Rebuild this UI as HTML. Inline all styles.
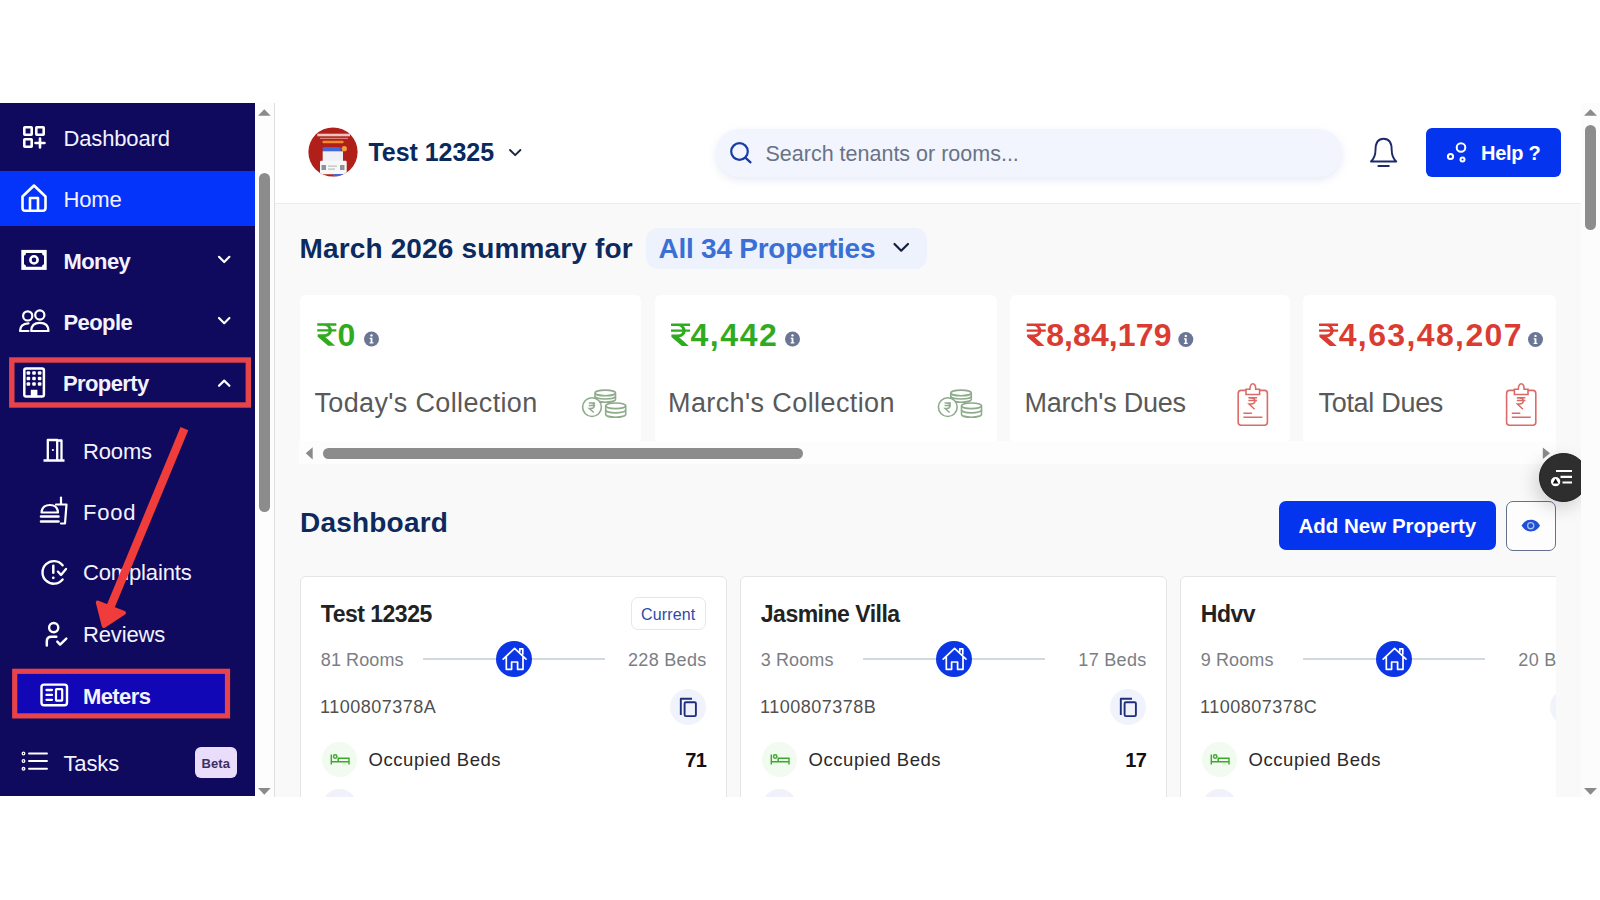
<!DOCTYPE html>
<html><head><meta charset="utf-8"><title>Dashboard</title>
<style>
*{box-sizing:border-box;margin:0;padding:0}
html,body{width:1600px;height:900px;overflow:hidden;background:#fff;font-family:"Liberation Sans",sans-serif}
.a{position:absolute}
.t{position:absolute;white-space:nowrap;line-height:1}
svg{position:absolute;overflow:visible}
#side{left:0;top:103px;width:255px;height:693px;background:#0f0a5e;overflow:hidden}
.st{color:#f4f2ff;font-size:22px;letter-spacing:-0.15px}
.sb{font-weight:bold;letter-spacing:-0.6px}
#main{left:275px;top:103px;width:1306px;height:694px;background:#f9f9f9;overflow:hidden}
</style></head><body>

<!-- SIDEBAR -->
<div id="side" class="a"></div>
<div class="a" style="left:0;top:171px;width:255px;height:55px;background:#0434fa"></div>
<div class="a" style="left:14px;top:671px;width:214px;height:45px;background:#1107b6"></div>

<div class="t st" style="left:63.5px;top:128px">Dashboard</div>
<div class="t st" style="left:63.5px;top:189.4px">Home</div>
<div class="t st sb" style="left:63.5px;top:251px">Money</div>
<div class="t st sb" style="left:63.5px;top:312px">People</div>
<div class="t st sb" style="left:63px;top:373px">Property</div>
<div class="t st" style="left:83px;top:441px">Rooms</div>
<div class="t st" style="left:83px;top:502.2px;letter-spacing:0.8px">Food</div>
<div class="t st" style="left:83px;top:562.4px">Complaints</div>
<div class="t st" style="left:83px;top:624px">Reviews</div>
<div class="t st sb" style="left:83px;top:685.8px">Meters</div>
<div class="t st" style="left:63.5px;top:753px">Tasks</div>
<div class="a" style="left:195px;top:747px;width:42px;height:31px;background:#e9ddfb;border-radius:6px"></div>
<div class="t" style="left:201.5px;top:757.2px;font-size:13px;font-weight:bold;color:#3b2f63;letter-spacing:0.1px">Beta</div>

<!-- sidebar icons -->
<svg style="left:0;top:0" width="255" height="900" viewBox="0 0 255 900" fill="none" stroke="#fff" stroke-width="2.6" stroke-linejoin="round" stroke-linecap="round">
  <!-- dashboard -->
  <rect x="24.3" y="127.3" width="7.4" height="7.4" rx="0.5"/>
  <rect x="36.3" y="127.3" width="7.4" height="7.4" rx="0.5"/>
  <rect x="24.3" y="139.3" width="7.4" height="7.4" rx="0.5"/>
  <path d="M40 138.5v9M35.5 143h9"/>
  <!-- home -->
  <path d="M22.5 196.5 L34 185.5 L45.5 196.5 V208 Q45.5 210.8 42.7 210.8 H25.3 Q22.5 210.8 22.5 208 Z"/>
  <path d="M30 210.5 V198 H38 V210.5"/>
  <!-- money -->
  <rect x="21.3" y="249.9" width="25.4" height="20" fill="#fff" stroke="none"/>
  <path d="M26 253 H42 Q42 255.5 44 255.5 V264.3 Q42 264.3 42 266.8 H26 Q26 264.3 24 264.3 V255.5 Q26 255.5 26 253 Z" fill="#0f0a5e" stroke="none"/>
  <circle cx="34" cy="259.9" r="3.6" stroke-width="2.6"/>
  <!-- people -->
  <circle cx="27.7" cy="315.9" r="4.6" stroke-width="2.2"/>
  <circle cx="39.8" cy="315" r="4.6" stroke-width="2.2"/>
  <path d="M31.2 331 H48.5 Q48.5 322.8 39.8 322.8 Q31.2 322.8 31.2 331 Z" stroke-width="2.2"/>
  <path d="M28.5 323.3 Q20 323.8 20 331 H28.5" stroke-width="2.2"/>
  <!-- property -->
  <rect x="24.3" y="368.5" width="19.6" height="28" rx="1.8" stroke-width="2.5"/>
  <g fill="#fff" stroke="none">
    <rect x="26.6" y="371.2" width="3.6" height="3.6" rx="1"/><rect x="32.2" y="371.2" width="3.6" height="3.6" rx="1"/><rect x="37.8" y="371.2" width="3.6" height="3.6" rx="1"/>
    <rect x="26.6" y="376.7" width="3.6" height="3.6" rx="1"/><rect x="32.2" y="376.7" width="3.6" height="3.6" rx="1"/><rect x="37.8" y="376.7" width="3.6" height="3.6" rx="1"/>
    <rect x="26.6" y="382.2" width="3.6" height="3.6" rx="1"/><rect x="32.2" y="382.2" width="3.6" height="3.6" rx="1"/><rect x="37.8" y="382.2" width="3.6" height="3.6" rx="1"/>
    <rect x="30.8" y="389.8" width="6.6" height="7.5"/>
  </g>
  <!-- rooms -->
  <path d="M43.5 460.5 H64.5 M47.8 460.5 V440 H57.2 V460.5 M57.2 440.5 H61.5 V460.5" stroke-width="2.3" stroke-linecap="butt"/>
  <circle cx="52.9" cy="450" r="1.1" fill="#fff" stroke="none"/>
  <!-- food -->
  <path d="M41.5 512.5 Q42 505 50 505 Q57.5 505 58 512.5 Z" stroke-width="2.2"/>
  <path d="M41 516.5 H58.5 M41 521.5 H58.5" stroke-width="2.6"/>
  <path d="M56 504.5 H66.5 L65 523.5 H61" stroke-width="2.2"/>
  <path d="M61 504 V497.5" stroke-width="2.2"/>
  <!-- complaints -->
  <path d="M62.6 565.3 A11.3 11.3 0 1 0 62.6 579.5" stroke-width="2.4"/>
  <path d="M53.3 565.8 V572.8" stroke-width="2.5"/>
  <circle cx="53.3" cy="577.8" r="1.4" fill="#fff" stroke="none"/>
  <path d="M57.9 571.6 L61 575 L66 569" stroke-width="2.3"/>
  <!-- reviews -->
  <circle cx="53.7" cy="627.6" r="4.6" stroke-width="2.4"/>
  <path d="M46.8 645.5 V641.5 Q46.8 636.8 51.5 636.8 H56.3" stroke-width="2.5"/>
  <path d="M57.3 641.6 L60.1 644.6 L66.3 638.6" stroke-width="2.4"/>
  <!-- meters -->
  <rect x="41.5" y="684.6" width="25.5" height="20.6" rx="2.5" stroke-width="2.4"/>
  <path d="M46.5 690 H52 M46.5 694.9 H52 M46.5 699.8 H52" stroke-width="2.3"/>
  <rect x="56" y="689.2" width="6.2" height="11.4" rx="0.5" stroke-width="2.2"/>
  <!-- tasks -->
  <circle cx="23.5" cy="753.5" r="1.3" stroke-width="1.3"/>
  <circle cx="23.5" cy="761" r="1.3" stroke-width="1.3"/>
  <circle cx="23.5" cy="768.8" r="1.3" stroke-width="1.3"/>
  <path d="M29 753.5 H47 M29 761 H47 M29 768.8 H47" stroke-width="1.9"/>
  <!-- chevrons -->
  <path d="M219 256.8 L224.2 262 L229.4 256.8" stroke-width="2.2"/>
  <path d="M219 318 L224.2 323.2 L229.4 318" stroke-width="2.2"/>
  <path d="M219 385.8 L224.2 380.6 L229.4 385.8" stroke-width="2.2"/>
</svg>

<!-- sidebar scrollbar -->
<div class="a" style="left:255px;top:103px;width:19px;height:694px;background:#fdfdfd"></div>
<div class="a" style="left:274px;top:103px;width:1px;height:694px;background:#dedede"></div>
<div class="a" style="left:259px;top:173px;width:11px;height:339px;background:#8c8c8c;border-radius:6px"></div>
<svg style="left:0;top:0" width="300" height="900"><path d="M258 115.8 L264.3 109.2 L270.7 115.8 Z" fill="#8a8a8a"/><path d="M258 788 L264.3 794.7 L270.7 788 Z" fill="#8a8a8a"/></svg>

<!-- MAIN -->
<div id="main" class="a"></div>
<div class="a" style="left:275px;top:103px;width:1306px;height:100.5px;background:#fff;border-bottom:1px solid #ebebeb"></div>

<!-- HEADER -->
<svg style="left:308px;top:127px" width="50" height="50" viewBox="0 0 50 50">
  <defs><clipPath id="av"><circle cx="25" cy="25" r="24.6"/></clipPath></defs>
  <g clip-path="url(#av)">
    <rect width="50" height="50" fill="#b11f1b"/>
    <rect x="9.3" y="6.7" width="32.7" height="2.6" fill="#f6e2dc" opacity="0.85"/>
    <rect x="12" y="10.8" width="28" height="1.2" fill="#e79c90" opacity="0.8"/>
    <rect x="14.3" y="13.7" width="21.4" height="2.6" rx="1.2" fill="#ef8b2c"/>
    <circle cx="36.3" cy="21.7" r="2.6" fill="#eea23a"/>
    <rect x="14.7" y="20" width="18" height="5" rx="1.5" fill="#4568d6"/>
    <rect x="14.7" y="24.3" width="20.3" height="12" fill="#eef0f6"/>
    <rect x="12" y="33.7" width="26.7" height="13.5" rx="1.2" fill="#f8f8f8"/>
    <rect x="13.5" y="38" width="4.5" height="5" fill="#8d919b"/>
    <rect x="32" y="38" width="4.5" height="5" fill="#8d919b"/>
    <rect x="20" y="38.5" width="9" height="1.2" fill="#b9bcc4"/>
    <rect x="20" y="41.5" width="7" height="1.2" fill="#b9bcc4"/>
    <rect x="25" y="47" width="10" height="2.5" fill="#4568d6"/>
  </g>
</svg>
<div class="t" style="left:368.5px;top:139.8px;font-size:25px;font-weight:bold;color:#0b2a5c;letter-spacing:-0.05px">Test 12325</div>
<svg style="left:0;top:0" width="1600" height="900" fill="none" stroke-linecap="round" stroke-linejoin="round">
  <path d="M510 150 L515.2 155.2 L520.4 150" stroke="#1b2440" stroke-width="1.9"/>
</svg>
<div class="a" style="left:716px;top:128.5px;width:626px;height:48px;border-radius:24px;background:#f2f5fd;box-shadow:0 3px 8px rgba(120,140,210,0.18)"></div>
<svg style="left:0;top:0" width="1600" height="900" fill="none" stroke-linecap="round">
  <circle cx="739.5" cy="151.5" r="8.3" stroke="#1a3aa6" stroke-width="2.2"/>
  <path d="M745.6 157.8 L750.5 162.3" stroke="#1a3aa6" stroke-width="2.3"/>
</svg>
<div class="t" style="left:765.5px;top:143.6px;font-size:21.5px;color:#697386">Search tenants or rooms...</div>
<svg style="left:0;top:0" width="1600" height="900" fill="none" stroke="#1c2a6a" stroke-linecap="round" stroke-linejoin="round">
  <path d="M1371 161.5 Q1375.5 157 1375.5 150 Q1375.5 138.7 1383.6 138.7 Q1391.7 138.7 1391.7 150 Q1391.7 157 1396.2 161.5 Z" stroke-width="1.9"/>
  <path d="M1378.5 166 H1388.7" stroke-width="2.2"/>
</svg>
<div class="a" style="left:1426px;top:128.3px;width:134.5px;height:48.6px;border-radius:6px;background:#0534ee"></div>
<svg style="left:0;top:0" width="1600" height="900" fill="none" stroke="#fff" stroke-width="2">
  <circle cx="1461" cy="147.5" r="4.3"/>
  <circle cx="1450.5" cy="156.5" r="2.6"/>
  <circle cx="1462.5" cy="159.5" r="2"/>
</svg>
<div class="t" style="left:1481px;top:143.1px;font-size:20px;font-weight:bold;color:#fff;letter-spacing:-0.3px">Help ?</div>

<!-- SUMMARY -->
<div class="t" style="left:299.5px;top:235.2px;font-size:28px;font-weight:bold;color:#0c2a5e;letter-spacing:0.15px">March 2026 summary for</div>
<div class="a" style="left:646px;top:228px;width:281px;height:41px;border-radius:12px;background:#edf2fc"></div>
<div class="t" style="left:658.5px;top:234.9px;font-size:28px;font-weight:bold;color:#3a6fd6;letter-spacing:-0.25px">All 34 Properties</div>
<svg style="left:0;top:0" width="1600" height="900" fill="none" stroke-linecap="round" stroke-linejoin="round">
  <path d="M894.5 244 L901.2 250.7 L908 244" stroke="#15203e" stroke-width="2.2"/>
</svg>

<!-- STAT CARDS -->
<div class="a" style="left:300px;top:294.5px;width:341px;height:149px;background:#fff;border-radius:6px"></div>
<div class="a" style="left:654.5px;top:294.5px;width:342.5px;height:149px;background:#fff;border-radius:6px"></div>
<div class="a" style="left:1010px;top:294.5px;width:280px;height:149px;background:#fff;border-radius:6px"></div>
<div class="a" style="left:1302.5px;top:294.5px;width:253.5px;height:149px;background:#fff;border-radius:6px"></div>

<svg style="left:0;top:0" width="1600" height="900" fill="none">
  
  <path transform="translate(317.25 323.3) scale(1.09 1)" fill="#30ab1f" d="M0 0 H17.5 V2.5 H11.4 C12.4 3.4 13.1 4.6 13.4 6 H17.5 V8.1 H13.4 C12.8 11.3 10.6 13.3 7.4 13.7 L16.4 22.4 H10 L0.4 13.4 V10.9 H6.2 C8.6 10.9 10 9.8 10.4 8.1 H0 V6 H10.4 C10 4.1 8.6 2.5 6.2 2.5 H0 Z"/>
  <path transform="translate(671 323.6) scale(1.09 1)" fill="#30ab1f" d="M0 0 H17.5 V2.5 H11.4 C12.4 3.4 13.1 4.6 13.4 6 H17.5 V8.1 H13.4 C12.8 11.3 10.6 13.3 7.4 13.7 L16.4 22.4 H10 L0.4 13.4 V10.9 H6.2 C8.6 10.9 10 9.8 10.4 8.1 H0 V6 H10.4 C10 4.1 8.6 2.5 6.2 2.5 H0 Z"/>
  <path transform="translate(1026.7 323.6) scale(1.09 1)" fill="#db3c31" d="M0 0 H17.5 V2.5 H11.4 C12.4 3.4 13.1 4.6 13.4 6 H17.5 V8.1 H13.4 C12.8 11.3 10.6 13.3 7.4 13.7 L16.4 22.4 H10 L0.4 13.4 V10.9 H6.2 C8.6 10.9 10 9.8 10.4 8.1 H0 V6 H10.4 C10 4.1 8.6 2.5 6.2 2.5 H0 Z"/>
  <path transform="translate(1319 323.6) scale(1.09 1)" fill="#db3c31" d="M0 0 H17.5 V2.5 H11.4 C12.4 3.4 13.1 4.6 13.4 6 H17.5 V8.1 H13.4 C12.8 11.3 10.6 13.3 7.4 13.7 L16.4 22.4 H10 L0.4 13.4 V10.9 H6.2 C8.6 10.9 10 9.8 10.4 8.1 H0 V6 H10.4 C10 4.1 8.6 2.5 6.2 2.5 H0 Z"/>
  <g transform="translate(371.5 339)">
      <circle cx="0" cy="0" r="7.5" fill="#6b7594"/>
      <circle cx="0" cy="-3.6" r="1.2" fill="#fff"/>
      <path d="M-1.8 -1.3 H0.9 V3.2 H1.9 V4.4 H-1.9 V3.2 H-0.9 V-0.1 H-1.8 Z" fill="#fff"/>
    </g>
  <g transform="translate(792.5 339)">
      <circle cx="0" cy="0" r="7.5" fill="#6b7594"/>
      <circle cx="0" cy="-3.6" r="1.2" fill="#fff"/>
      <path d="M-1.8 -1.3 H0.9 V3.2 H1.9 V4.4 H-1.9 V3.2 H-0.9 V-0.1 H-1.8 Z" fill="#fff"/>
    </g>
  <g transform="translate(1185.8 339.5)">
      <circle cx="0" cy="0" r="7.5" fill="#6b7594"/>
      <circle cx="0" cy="-3.6" r="1.2" fill="#fff"/>
      <path d="M-1.8 -1.3 H0.9 V3.2 H1.9 V4.4 H-1.9 V3.2 H-0.9 V-0.1 H-1.8 Z" fill="#fff"/>
    </g>
  <g transform="translate(1535.5 339.5)">
      <circle cx="0" cy="0" r="7.5" fill="#6b7594"/>
      <circle cx="0" cy="-3.6" r="1.2" fill="#fff"/>
      <path d="M-1.8 -1.3 H0.9 V3.2 H1.9 V4.4 H-1.9 V3.2 H-0.9 V-0.1 H-1.8 Z" fill="#fff"/>
    </g>
  <g transform="translate(582 388.6)" stroke="#8eab8b" stroke-width="1.6" fill="#fff">
      <path d="M13 4.3 V10.8 A10.25 2.8 0 0 0 33.5 10.8 V4.3"/>
      <ellipse cx="23.25" cy="4.3" rx="10.25" ry="2.8"/>
      <path d="M13 7.6 A10.25 2.8 0 0 0 33.5 7.6" fill="none"/>
      <circle cx="10" cy="18.5" r="9.4"/>
      <path d="M6.8 14.3 H13.2 M6.8 16.9 H13.2 M7.4 14.5 H9.2 C11.4 14.5 12.2 15.7 12.2 17.2 C12.2 18.7 11.2 19.9 9 19.9 H7.3 L11.8 23.9" stroke-width="1.5" fill="none"/>
      <path d="M23.7 17.2 V25.8 A10 2.8 0 0 0 43.7 25.8 V17.2"/>
      <ellipse cx="33.7" cy="17.2" rx="10" ry="2.8"/>
      <path d="M23.7 21.5 A10 2.8 0 0 0 43.7 21.5" fill="none"/>
    </g>
  <g transform="translate(937.8 388.6)" stroke="#8eab8b" stroke-width="1.6" fill="#fff">
      <path d="M13 4.3 V10.8 A10.25 2.8 0 0 0 33.5 10.8 V4.3"/>
      <ellipse cx="23.25" cy="4.3" rx="10.25" ry="2.8"/>
      <path d="M13 7.6 A10.25 2.8 0 0 0 33.5 7.6" fill="none"/>
      <circle cx="10" cy="18.5" r="9.4"/>
      <path d="M6.8 14.3 H13.2 M6.8 16.9 H13.2 M7.4 14.5 H9.2 C11.4 14.5 12.2 15.7 12.2 17.2 C12.2 18.7 11.2 19.9 9 19.9 H7.3 L11.8 23.9" stroke-width="1.5" fill="none"/>
      <path d="M23.7 17.2 V25.8 A10 2.8 0 0 0 43.7 25.8 V17.2"/>
      <ellipse cx="33.7" cy="17.2" rx="10" ry="2.8"/>
      <path d="M23.7 21.5 A10 2.8 0 0 0 43.7 21.5" fill="none"/>
    </g>
  <g transform="translate(1237.4 383)" stroke="#da6b66" stroke-width="1.6">
      <rect x="0.8" y="7.4" width="29.2" height="34.8" rx="3"/>
      <path d="M8.6 11.5 V6.2 H12.5 C12.5 2.5 14 0.8 15.4 0.8 C16.8 0.8 18.3 2.5 18.3 6.2 H22.2 V11.5 Z" fill="#fff"/>
      <path d="M11 14.8 H19.6 M11 17.6 H19.6 M11.8 15 H13.8 C16.3 15 17.5 16.2 17.5 18 C17.5 19.8 16.2 21 13.6 21 H11.6 L17.2 26.3" stroke-width="1.5"/>
      <path d="M6 30.2 H14.5 M6 34.2 H25" stroke-width="1.6"/>
    </g>
  <g transform="translate(1505.8 383)" stroke="#da6b66" stroke-width="1.6">
      <rect x="0.8" y="7.4" width="29.2" height="34.8" rx="3"/>
      <path d="M8.6 11.5 V6.2 H12.5 C12.5 2.5 14 0.8 15.4 0.8 C16.8 0.8 18.3 2.5 18.3 6.2 H22.2 V11.5 Z" fill="#fff"/>
      <path d="M11 14.8 H19.6 M11 17.6 H19.6 M11.8 15 H13.8 C16.3 15 17.5 16.2 17.5 18 C17.5 19.8 16.2 21 13.6 21 H11.6 L17.2 26.3" stroke-width="1.5"/>
      <path d="M6 30.2 H14.5 M6 34.2 H25" stroke-width="1.6"/>
    </g>
</svg>
<div class="t" style="left:337.5px;top:318.8px;font-size:32px;font-weight:bold;color:#30ab1f">0</div>
<div class="t" style="left:690.5px;top:318.8px;font-size:32px;font-weight:bold;color:#30ab1f;letter-spacing:1.55px">4,442</div>
<div class="t" style="left:1046.2px;top:318.8px;font-size:32px;font-weight:bold;color:#db3c31;letter-spacing:0.1px">8,84,179</div>
<div class="t" style="left:1338.7px;top:318.8px;font-size:32px;font-weight:bold;color:#db3c31;letter-spacing:1.38px">4,63,48,207</div>
<div class="t" style="left:314.5px;top:389.6px;font-size:27px;color:#595959;letter-spacing:0.35px">Today's Collection</div>
<div class="t" style="left:668px;top:389.6px;font-size:27px;color:#595959;letter-spacing:0.4px">March's Collection</div>
<div class="t" style="left:1024.5px;top:389.6px;font-size:27px;color:#595959;letter-spacing:-0.25px">March's Dues</div>
<div class="t" style="left:1318.5px;top:389.6px;font-size:27px;color:#595959;letter-spacing:-0.3px">Total Dues</div>

<!-- h-scrollbar -->
<div class="a" style="left:298.5px;top:440.5px;width:1257.5px;height:23px;background:#fdfdfd"></div>
<div class="a" style="left:322.5px;top:448px;width:480.5px;height:11px;background:#8c8c8c;border-radius:5.5px"></div>
<svg style="left:0;top:0" width="1600" height="900">
  <path d="M312.7 447.2 L305.7 453.3 L312.7 459.5 Z" fill="#8a8a8a"/>
  <path d="M1542.8 447.4 L1550 453.2 L1542.8 459 Z" fill="#8a8a8a"/>
</svg>

<!-- DASHBOARD HEADING -->
<div class="t" style="left:300px;top:508.8px;font-size:28px;font-weight:bold;color:#0c2a5e;letter-spacing:0.2px">Dashboard</div>
<div class="a" style="left:1279px;top:501.3px;width:217px;height:49px;border-radius:7px;background:#0534ee"></div>
<div class="t" style="left:1298.5px;top:516.4px;font-size:20.5px;font-weight:bold;color:#fff;letter-spacing:0px">Add New Property</div>
<div class="a" style="left:1506px;top:501.3px;width:50px;height:49.6px;border-radius:7px;background:#fdfdfd;border:1.2px solid #65708f"></div>
<svg style="left:0;top:0" width="1600" height="900">
  <path d="M1521.5 525.6 C1524.2 521.2 1527.2 519.7 1530.8 519.7 C1534.4 519.7 1537.4 521.2 1540.1 525.6 C1537.4 530 1534.4 531.4 1530.8 531.4 C1527.2 531.4 1524.2 530 1521.5 525.6 Z" fill="#1f4fd6"/>
  <circle cx="1530.7" cy="525.7" r="3.7" fill="#a9c0f0"/>
  <circle cx="1530.7" cy="525.7" r="2.4" fill="#1f4fd6"/>
</svg>

<!-- PROPERTY CARDS -->
<div class="a" style="left:275px;top:560px;width:1281px;height:237px;overflow:hidden">
<div class="a" style="left:24.7px;top:15.8px;width:427.5px;height:300px;background:#fff;border:1px solid #e5e5e7;border-radius:6px"></div>
<div class="t" style="left:45.8px;top:42.5px;font-size:23px;font-weight:bold;color:#222;letter-spacing:-0.5px">Test 12325</div>
<div class="a" style="left:355.8px;top:36.7px;width:75.6px;height:33.6px;border:1px solid #e4e7ee;border-radius:7px;background:#fff"></div>
<div class="t" style="left:366px;top:47.3px;font-size:16px;color:#2d4aa8;letter-spacing:0.15px">Current</div>
<div class="t" style="left:45.8px;top:91.2px;font-size:18px;color:#7b7e84;letter-spacing:0.1px">81 Rooms</div>
<div class="t" style="left:252px;top:91.2px;width:179.5px;text-align:right;font-size:18px;color:#7b7e84;letter-spacing:0.3px">228 Beds</div>
<div class="a" style="left:147.7px;top:98.2px;width:182px;height:1.6px;background:#d3d7de"></div>
<div class="a" style="left:220.6px;top:81.2px;width:36px;height:36px;border-radius:50%;background:#0a36e6"></div>
<svg style="left:220.6px;top:81.2px" width="36" height="36" fill="none" stroke="#fff" stroke-width="1.7" stroke-linejoin="round" stroke-linecap="round"><path d="M7.2 18.2 L18.6 7.4 L30 18.2 M10.3 15.6 V28.3 H15.6 V21 H21.6 V28.3 H27 V15.6 M23.8 10.3 V7.8 H26.8 V13"/></svg>
<div class="t" style="left:45px;top:138.3px;font-size:18px;color:#505050;letter-spacing:0.5px">1100807378A</div>
<div class="a" style="left:395px;top:128.7px;width:36px;height:36px;border-radius:50%;background:#f0f3fb"></div>
<svg style="left:395px;top:128.7px" width="36" height="36" fill="none" stroke="#1f2f7a" stroke-width="1.9" stroke-linejoin="round"><path d="M10.8 26 V9.8 H22"/><rect x="14.6" y="13.3" width="11.3" height="13.8" rx="1.3"/></svg>
<div class="a" style="left:47px;top:181.5px;width:35px;height:35px;border-radius:50%;background:#f2fbf0"></div>
<svg style="left:47px;top:181.5px" width="35" height="35" fill="none" stroke="#3aaa2a" stroke-width="1.45"><path d="M9.3 12.5 V22.6 M9.3 19.7 H27 M27 22.6 V16.2 H16.2 V19.7"/><circle cx="13.2" cy="14.5" r="1.7"/></svg>
<div class="t" style="left:93.5px;top:191px;font-size:18.5px;color:#2a2a2a;letter-spacing:0.55px">Occupied Beds</div>
<div class="t" style="left:331px;top:190.4px;width:100px;text-align:right;font-size:20px;font-weight:bold;color:#111;letter-spacing:-0.8px">71</div>
<div class="a" style="left:47px;top:228.6px;width:35px;height:35px;border-radius:50%;background:#f0f1fa"></div>
<div class="a" style="left:464.7px;top:15.8px;width:427.5px;height:300px;background:#fff;border:1px solid #e5e5e7;border-radius:6px"></div>
<div class="t" style="left:485.8px;top:42.5px;font-size:23px;font-weight:bold;color:#222;letter-spacing:-0.5px">Jasmine Villa</div>
<div class="t" style="left:485.8px;top:91.2px;font-size:18px;color:#7b7e84;letter-spacing:0.1px">3 Rooms</div>
<div class="t" style="left:692px;top:91.2px;width:179.5px;text-align:right;font-size:18px;color:#7b7e84;letter-spacing:0.3px">17 Beds</div>
<div class="a" style="left:587.7px;top:98.2px;width:182px;height:1.6px;background:#d3d7de"></div>
<div class="a" style="left:660.6px;top:81.2px;width:36px;height:36px;border-radius:50%;background:#0a36e6"></div>
<svg style="left:660.6px;top:81.2px" width="36" height="36" fill="none" stroke="#fff" stroke-width="1.7" stroke-linejoin="round" stroke-linecap="round"><path d="M7.2 18.2 L18.6 7.4 L30 18.2 M10.3 15.6 V28.3 H15.6 V21 H21.6 V28.3 H27 V15.6 M23.8 10.3 V7.8 H26.8 V13"/></svg>
<div class="t" style="left:485px;top:138.3px;font-size:18px;color:#505050;letter-spacing:0.5px">1100807378B</div>
<div class="a" style="left:835px;top:128.7px;width:36px;height:36px;border-radius:50%;background:#f0f3fb"></div>
<svg style="left:835px;top:128.7px" width="36" height="36" fill="none" stroke="#1f2f7a" stroke-width="1.9" stroke-linejoin="round"><path d="M10.8 26 V9.8 H22"/><rect x="14.6" y="13.3" width="11.3" height="13.8" rx="1.3"/></svg>
<div class="a" style="left:487px;top:181.5px;width:35px;height:35px;border-radius:50%;background:#f2fbf0"></div>
<svg style="left:487px;top:181.5px" width="35" height="35" fill="none" stroke="#3aaa2a" stroke-width="1.45"><path d="M9.3 12.5 V22.6 M9.3 19.7 H27 M27 22.6 V16.2 H16.2 V19.7"/><circle cx="13.2" cy="14.5" r="1.7"/></svg>
<div class="t" style="left:533.5px;top:191px;font-size:18.5px;color:#2a2a2a;letter-spacing:0.55px">Occupied Beds</div>
<div class="t" style="left:771px;top:190.4px;width:100px;text-align:right;font-size:20px;font-weight:bold;color:#111;letter-spacing:-0.8px">17</div>
<div class="a" style="left:487px;top:228.6px;width:35px;height:35px;border-radius:50%;background:#f0f1fa"></div>
<div class="a" style="left:904.7px;top:15.8px;width:427.5px;height:300px;background:#fff;border:1px solid #e5e5e7;border-radius:6px"></div>
<div class="t" style="left:925.8px;top:42.5px;font-size:23px;font-weight:bold;color:#222;letter-spacing:-0.5px">Hdvv</div>
<div class="t" style="left:925.8px;top:91.2px;font-size:18px;color:#7b7e84;letter-spacing:0.1px">9 Rooms</div>
<div class="t" style="left:1132px;top:91.2px;width:179.5px;text-align:right;font-size:18px;color:#7b7e84;letter-spacing:0.3px">20 Beds</div>
<div class="a" style="left:1027.7px;top:98.2px;width:182px;height:1.6px;background:#d3d7de"></div>
<div class="a" style="left:1100.6px;top:81.2px;width:36px;height:36px;border-radius:50%;background:#0a36e6"></div>
<svg style="left:1100.6px;top:81.2px" width="36" height="36" fill="none" stroke="#fff" stroke-width="1.7" stroke-linejoin="round" stroke-linecap="round"><path d="M7.2 18.2 L18.6 7.4 L30 18.2 M10.3 15.6 V28.3 H15.6 V21 H21.6 V28.3 H27 V15.6 M23.8 10.3 V7.8 H26.8 V13"/></svg>
<div class="t" style="left:925px;top:138.3px;font-size:18px;color:#505050;letter-spacing:0.5px">1100807378C</div>
<div class="a" style="left:1275px;top:128.7px;width:36px;height:36px;border-radius:50%;background:#f0f3fb"></div>
<svg style="left:1275px;top:128.7px" width="36" height="36" fill="none" stroke="#1f2f7a" stroke-width="1.9" stroke-linejoin="round"><path d="M10.8 26 V9.8 H22"/><rect x="14.6" y="13.3" width="11.3" height="13.8" rx="1.3"/></svg>
<div class="a" style="left:927px;top:181.5px;width:35px;height:35px;border-radius:50%;background:#f2fbf0"></div>
<svg style="left:927px;top:181.5px" width="35" height="35" fill="none" stroke="#3aaa2a" stroke-width="1.45"><path d="M9.3 12.5 V22.6 M9.3 19.7 H27 M27 22.6 V16.2 H16.2 V19.7"/><circle cx="13.2" cy="14.5" r="1.7"/></svg>
<div class="t" style="left:973.5px;top:191px;font-size:18.5px;color:#2a2a2a;letter-spacing:0.55px">Occupied Beds</div>
<div class="a" style="left:927px;top:228.6px;width:35px;height:35px;border-radius:50%;background:#f0f1fa"></div>
</div>

<!-- floating button -->
<div class="a" style="left:1539px;top:452.5px;width:49px;height:49px;border-radius:50%;background:#2e2e2e;border:1.5px solid #1b1b1b;box-shadow:-4px 6px 18px rgba(0,0,0,0.16)"></div>
<svg style="left:0;top:0" width="1600" height="900">
  <path d="M1556 471 H1572 M1560.5 476.8 H1572 M1562.5 482.5 H1572" stroke="#fff" stroke-width="2.2"/>
  <circle cx="1555.6" cy="481.6" r="5.3" fill="#fff" stroke="#2e2e2e" stroke-width="1.2"/>
  <path d="M1555.6 478.6 L1558.4 483.6 H1552.8 Z" fill="#111"/>
</svg>

<!-- ANNOTATIONS -->
<svg style="left:0;top:0" width="1600" height="900" fill="none">
  <rect x="11.8" y="360" width="236.5" height="45" stroke="#e6434b" stroke-width="5.4"/>
  <rect x="14.7" y="671.3" width="212.8" height="44.6" stroke="#e6434b" stroke-width="5.2"/>
  <path d="M184.4 428.7 L110 608" stroke="#f03c3a" stroke-width="8.4" stroke-linecap="butt"/>
  <path d="M97.8 602.5 L124 612.8 L103.8 626 Z" fill="#f03c3a" stroke="#f03c3a" stroke-width="4" stroke-linejoin="round"/>
</svg>

<!-- right scrollbar -->
<div class="a" style="left:1581px;top:103px;width:19px;height:694px;background:#fcfcfc"></div>
<div class="a" style="left:1585px;top:125px;width:11px;height:105px;background:#8c8c8c;border-radius:6px"></div>
<svg style="left:0;top:0" width="1600" height="900"><path d="M1584 115.8 L1590.5 109.2 L1597 115.8 Z" fill="#8a8a8a"/><path d="M1584 788 L1590.5 794.7 L1597 788 Z" fill="#8a8a8a"/></svg>

</body></html>
